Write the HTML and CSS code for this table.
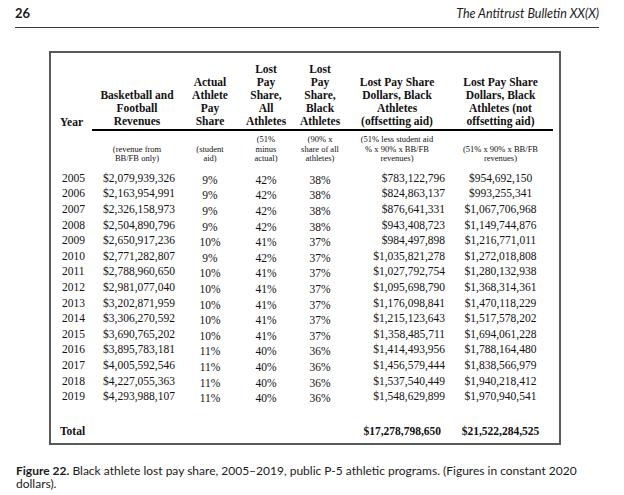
FILE: index.html
```html
<!DOCTYPE html>
<html>
<head>
<meta charset="utf-8">
<link rel="stylesheet" href="styles.css">
</head>
<body>
<header class="running-head">
  <span class="page-num">26</span>
  <span class="journal">The Antitrust Bulletin XX(X)</span>
</header>

<div class="figure-box">
  <table class="data">
    <colgroup>
      <col class="c-year"><col class="c-rev"><col class="c-act"><col class="c-all"><col class="c-blk"><col class="c-off"><col class="c-not">
    </colgroup>
    <thead>
      <tr class="head">
        <th class="year-h">Year</th>
        <th class="u">Basketball and<br>Football<br>Revenues</th>
        <th class="u">Actual<br>Athlete<br>Pay<br>Share</th>
        <th class="u">Lost<br>Pay<br>Share,<br>All<br>Athletes</th>
        <th class="u">Lost<br>Pay<br>Share,<br>Black<br>Athletes</th>
        <th class="u">Lost Pay Share<br>Dollars, Black<br>Athletes<br>(offsetting aid)</th>
        <th class="u">Lost Pay Share<br>Dollars, Black<br>Athletes (not<br>offsetting aid)</th>
      </tr>
      <tr class="sub">
        <td></td>
        <td>(revenue from<br>BB/FB only)</td>
        <td>(student<br>aid)</td>
        <td>(51%<br>minus<br>actual)</td>
        <td>(90% x<br>share of all<br>athletes)</td>
        <td>(51% less student aid<br>% x 90% x BB/FB<br>revenues)</td>
        <td>(51% x 90% x BB/FB<br>revenues)</td>
      </tr>
    </thead>
    <tbody>
      <tr><td class="y">2005</td><td class="rev">$2,079,939,326</td><td class="p">9%</td><td class="p">42%</td><td class="p">38%</td><td class="off">$783,122,796</td><td class="not">$954,692,150</td></tr>
      <tr><td class="y">2006</td><td class="rev">$2,163,954,991</td><td class="p">9%</td><td class="p">42%</td><td class="p">38%</td><td class="off">$824,863,137</td><td class="not">$993,255,341</td></tr>
      <tr><td class="y">2007</td><td class="rev">$2,326,158,973</td><td class="p">9%</td><td class="p">42%</td><td class="p">38%</td><td class="off">$876,641,331</td><td class="not">$1,067,706,968</td></tr>
      <tr><td class="y">2008</td><td class="rev">$2,504,890,796</td><td class="p">9%</td><td class="p">42%</td><td class="p">38%</td><td class="off">$943,408,723</td><td class="not">$1,149,744,876</td></tr>
      <tr><td class="y">2009</td><td class="rev">$2,650,917,236</td><td class="p">10%</td><td class="p">41%</td><td class="p">37%</td><td class="off">$984,497,898</td><td class="not">$1,216,771,011</td></tr>
      <tr><td class="y">2010</td><td class="rev">$2,771,282,807</td><td class="p">9%</td><td class="p">42%</td><td class="p">37%</td><td class="off">$1,035,821,278</td><td class="not">$1,272,018,808</td></tr>
      <tr><td class="y">2011</td><td class="rev">$2,788,960,650</td><td class="p">10%</td><td class="p">41%</td><td class="p">37%</td><td class="off">$1,027,792,754</td><td class="not">$1,280,132,938</td></tr>
      <tr><td class="y">2012</td><td class="rev">$2,981,077,040</td><td class="p">10%</td><td class="p">41%</td><td class="p">37%</td><td class="off">$1,095,698,790</td><td class="not">$1,368,314,361</td></tr>
      <tr><td class="y">2013</td><td class="rev">$3,202,871,959</td><td class="p">10%</td><td class="p">41%</td><td class="p">37%</td><td class="off">$1,176,098,841</td><td class="not">$1,470,118,229</td></tr>
      <tr><td class="y">2014</td><td class="rev">$3,306,270,592</td><td class="p">10%</td><td class="p">41%</td><td class="p">37%</td><td class="off">$1,215,123,643</td><td class="not">$1,517,578,202</td></tr>
      <tr><td class="y">2015</td><td class="rev">$3,690,765,202</td><td class="p">10%</td><td class="p">41%</td><td class="p">37%</td><td class="off">$1,358,485,711</td><td class="not">$1,694,061,228</td></tr>
      <tr><td class="y">2016</td><td class="rev">$3,895,783,181</td><td class="p">11%</td><td class="p">40%</td><td class="p">36%</td><td class="off">$1,414,493,956</td><td class="not">$1,788,164,480</td></tr>
      <tr><td class="y">2017</td><td class="rev">$4,005,592,546</td><td class="p">11%</td><td class="p">40%</td><td class="p">36%</td><td class="off">$1,456,579,444</td><td class="not">$1,838,566,979</td></tr>
      <tr><td class="y">2018</td><td class="rev">$4,227,055,363</td><td class="p">11%</td><td class="p">40%</td><td class="p">36%</td><td class="off">$1,537,540,449</td><td class="not">$1,940,218,412</td></tr>
      <tr><td class="y">2019</td><td class="rev">$4,293,988,107</td><td class="p">11%</td><td class="p">40%</td><td class="p">36%</td><td class="off">$1,548,629,899</td><td class="not">$1,970,940,541</td></tr>
      <tr class="total"><td class="y">Total</td><td></td><td></td><td></td><td></td><td class="off tot-off">$17,278,798,650</td><td class="not">$21,522,284,525</td></tr>
    </tbody>
  </table>
</div>

<p class="caption"><b>Figure 22.</b> Black athlete lost pay share, 2005–2019, public P-5 athletic programs. (Figures in constant 2020 dollars).</p>
</body>
</html>
```

FILE: styles.css
```css
html, body {
  margin: 0;
  padding: 0;
  background: #ffffff;
}

.running-head {
  display: flex;
  justify-content: space-between;
  align-items: baseline;
  margin: 0 25px 0 15px;
  padding: 5px 0 5px 0;
  height: 17px;
  border-bottom: 1px solid #3a3a3a;
  font-family: "Lato", "Liberation Sans", sans-serif;
  color: #1a1a1a;
}

.page-num {
  font-weight: bold;
  font-size: 13px;
}

.journal {
  font-style: italic;
  font-size: 12.5px;
}

.figure-box {
  box-sizing: border-box;
  margin: 23px 0 0 49px;
  width: 512px;
  height: 394px;
  border: 2px solid #5a5a5a;
  padding-top: 10px;
}

.data {
  border-collapse: collapse;
  table-layout: fixed;
  width: 502px;
  font-family: "Liberation Serif", "Times New Roman", serif;
  color: #111;
}

.c-year { width: 41px; }
.c-rev { width: 90px; }
.c-act { width: 56px; }
.c-all { width: 56px; }
.c-blk { width: 52px; }
.c-off { width: 102px; }
.c-not { width: 105px; }

.head th {
  font-size: 11.5px;
  line-height: 13px;
  font-weight: bold;
  vertical-align: bottom;
  text-align: center;
  padding: 0 0 1px 0;
  white-space: nowrap;
}

.head th.u {
  border-bottom: 2px solid #000;
}

.head th.year-h {
  text-align: left;
  padding-left: 9px;
}

.sub td {
  font-size: 8.5px;
  line-height: 9.6px;
  text-align: center;
  vertical-align: bottom;
  padding: 4px 0 7px 0;
  white-space: nowrap;
}

tbody td {
  font-size: 11.5px;
  line-height: 15.6px;
  padding: 0;
  white-space: nowrap;
  vertical-align: top;
}

tbody td.y {
  padding-left: 11px;
}

tbody td.rev {
  padding-left: 11px;
}

tbody td.p {
  text-align: center;
  line-height: 11.6px;
  padding-top: 4px;
}

tbody td.off {
  text-align: right;
  padding-right: 3px;
}

tbody td.not {
  text-align: center;
}

.total td {
  font-weight: bold;
  padding-top: 19px;
}

.total td.y {
  padding-left: 9px;
}

.total td.tot-off {
  padding-right: 7px;
}

.caption {
  margin: 19px 40px 0 16px;
  font-family: "Lato", "Liberation Sans", sans-serif;
  font-size: 12px;
  line-height: 13px;
  color: #1a1a1a;
}

.caption b {
  font-weight: bold;
}
```
